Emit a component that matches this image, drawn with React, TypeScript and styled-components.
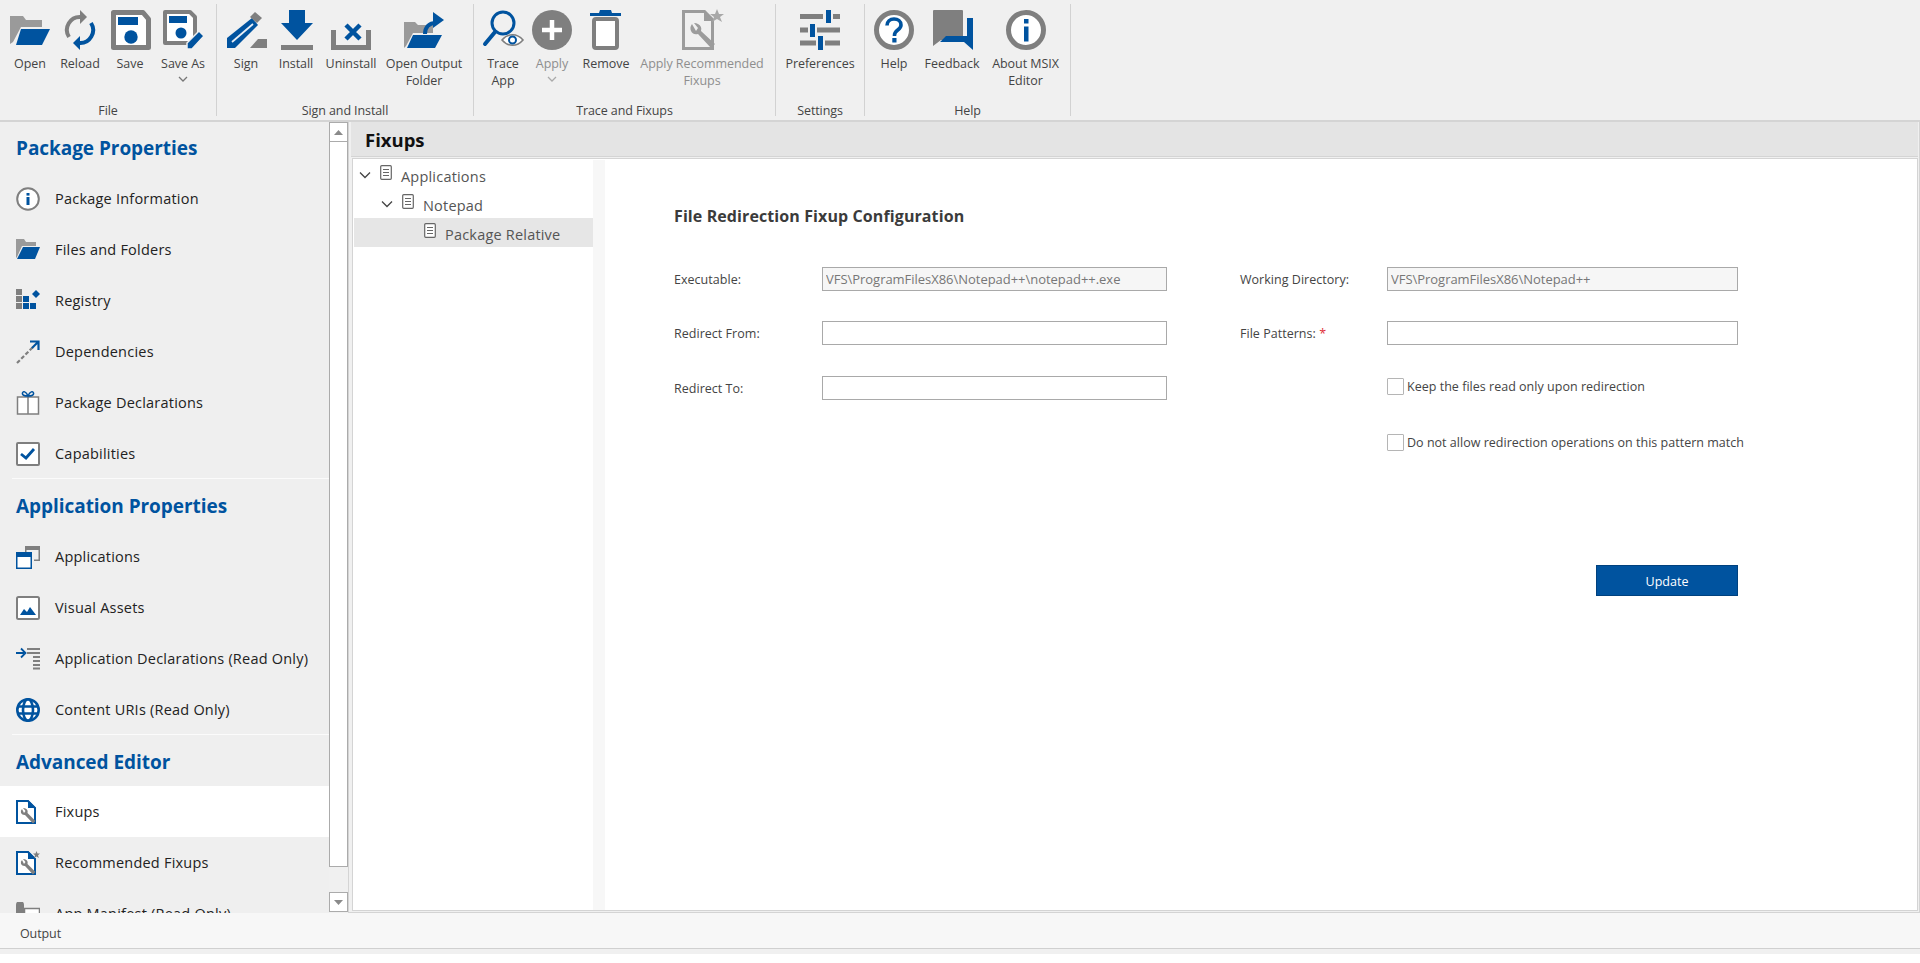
import React from "react";
import styled, { createGlobalStyle } from "styled-components";

const BLUE = "#00539f";
const GRAY = "#7f7f7f";
const FONT = `"Open Sans", "Noto Sans", "Liberation Sans", sans-serif`;

const Global = createGlobalStyle`
  html, body { margin: 0; padding: 0; height: 100%; background: #fff; }
  #root { height: 100%; }
  * { box-sizing: border-box; }
`;

const Page = styled.div`
  height: 963px;
  width: 1920px;
  display: flex;
  flex-direction: column;
  overflow: hidden;
  font-family: ${FONT};
  background: #fff;
`;

const Ribbon = styled.header`
  height: 122px;
  flex: none;
  display: flex;
  background: #f0f0f0;
  border-bottom: 2px solid #d4d4d4;
  padding-top: 4px;
`;

const Group = styled.section<{ $w: number; $pl?: number }>`
  width: ${(p) => p.$w}px;
  flex: none;
  height: 112px;
  border-right: 1px solid #d2d2d2;
  display: flex;
  flex-direction: column;
  padding-left: ${(p) => p.$pl ?? 0}px;
`;

const GroupButtons = styled.div`
  display: flex;
  flex: none;
  height: 100px;
`;

const GroupTitle = styled.div<{ $ml?: number }>`
  text-align: center;
  font-size: 12.5px;
  letter-spacing: -0.1px;
  line-height: 12px;
  padding-top: 1px;
  margin-left: ${(p) => p.$ml ?? 0}px;
  color: #444;
`;

const RibbonButton = styled.div<{ $w: number; $off?: boolean }>`
  width: ${(p) => p.$w}px;
  flex: none;
  display: flex;
  flex-direction: column;
  align-items: center;
  padding-top: 4px;
  color: ${(p) => (p.$off ? "#8e8e8e" : "#444")};
`;

const IconSlot = styled.svg`
  width: 44px;
  height: 44px;
  flex: none;
  display: block;
`;

const RibbonLabel = styled.div`
  margin-top: 3px;
  font-size: 12.5px;
  letter-spacing: -0.05px;
  line-height: 17px;
  text-align: center;
  white-space: pre-line;
`;

const Caret = styled.svg`
  width: 10px;
  height: 6px;
  margin-top: 4px;
  display: block;
`;

const Body = styled.div`
  height: 791px;
  flex: none;
  display: flex;
  background: #f0f0f0;
`;

const Nav = styled.nav`
  width: 329px;
  flex: none;
  overflow: hidden;
  background: #efefef;
`;

const NavHeading = styled.h2<{ $h?: number; $pt?: number }>`
  margin: 0;
  height: ${(p) => p.$h ?? 52}px;
  padding: ${(p) => p.$pt ?? 0}px 0 0 16px;
  display: flex;
  align-items: center;
  color: ${BLUE};
  font-size: 19px;
  font-weight: 700;
  letter-spacing: -0.05px;
`;

const NavRow = styled.div<{ $active?: boolean }>`
  height: 51px;
  flex: none;
  display: flex;
  align-items: center;
  gap: 15px;
  padding-left: 16px;
  background: ${(p) => (p.$active ? "#fff" : "transparent")};
  color: #222;
  font-size: 14.5px;
  letter-spacing: 0.22px;
  white-space: nowrap;
`;

const NavIcon = styled.svg`
  width: 24px;
  height: 24px;
  flex: none;
  display: block;
`;

const NavDivider = styled.div`
  height: 1px;
  margin: -1px 0 0 12px;
  background: #fbfbfb;
`;

const Scrollbar = styled.div`
  width: 19px;
  flex: none;
  display: flex;
  flex-direction: column;
  padding-bottom: 1px;
  background: #f0f0f0;
`;

const ScrollButton = styled.div`
  height: 20px;
  flex: none;
  background: #fff;
  border: 1px solid #ababab;
  display: flex;
  align-items: center;
  justify-content: center;
`;

const ScrollThumb = styled.div`
  height: 725px;
  flex: none;
  background: #fff;
  border: 1px solid #ababab;
  border-top: none;
`;

const ScrollTrack = styled.div`
  flex: 1;
`;

const Arrow = styled.svg`
  width: 9px;
  height: 5px;
  display: block;
`;

const Main = styled.main`
  flex: 1;
  min-width: 0;
  display: flex;
  flex-direction: column;
  padding: 0 1px 1px 3px;
  border-left: 1px solid #d4d4d4;
  border-right: 1px solid #d4d4d4;
  border-bottom: 1px solid #d4d4d4;
`;

const MainHeader = styled.div`
  height: 35px;
  flex: none;
  display: flex;
  align-items: center;
  padding-left: 14px;
  margin-left: -1px;
  background: #e4e4e4;
  border-bottom: 1px solid #d4d4d4;
  color: #111;
  font-size: 18.5px;
  font-weight: 700;
`;

const Panel = styled.div`
  flex: 1;
  min-height: 0;
  display: flex;
  margin-top: 1px;
  padding: 1px 0 0 1px;
  background: #fff;
  border: 1px solid #d4d4d4;
`;

const Tree = styled.div`
  width: 239px;
  flex: none;
  background: #fff;
`;

const TreeRow = styled.div<{ $depth: number; $selected?: boolean }>`
  height: 29px;
  display: flex;
  align-items: center;
  padding-left: ${(p) => 5 + p.$depth * 22}px;
  background: ${(p) => (p.$selected ? "#e6e6e6" : "transparent")};
`;

const TreeChevron = styled.svg`
  width: 12px;
  height: 8px;
  flex: none;
  display: block;
`;

const TreeGap = styled.span`
  width: 12px;
  flex: none;
`;

const TreeDoc = styled.svg`
  width: 12px;
  height: 15px;
  flex: none;
  margin: -5px 0 0 9px;
  display: block;
`;

const TreeText = styled.span`
  margin: 3px 0 0 9px;
  color: #555;
  font-size: 14.5px;
  letter-spacing: 0.2px;
  white-space: nowrap;
`;

const Gutter = styled.div`
  width: 12px;
  flex: none;
  background: #f7f7f7;
`;

const Form = styled.form`
  flex: 1;
  min-width: 0;
  padding: 47px 0 0 69px;
`;

const FormTitle = styled.h3`
  margin: 0 0 41px;
  height: 19px;
  line-height: 19px;
  font-size: 16px;
  font-weight: 700;
  color: #3b3b3b;
  letter-spacing: 0.1px;
`;

const FormColumns = styled.div`
  display: flex;
  gap: 73px;
`;

const FormColumn = styled.div<{ $w: number }>`
  width: ${(p) => p.$w}px;
  flex: none;
  display: flex;
  flex-direction: column;
`;

const Field = styled.div<{ $label: number; $gap?: number }>`
  height: 24px;
  margin-bottom: ${(p) => p.$gap ?? 30}px;
  display: grid;
  grid-template-columns: ${(p) => p.$label}px 1fr;
  align-items: center;
`;

const FieldLabel = styled.label`
  font-size: 12.5px;
  letter-spacing: 0.03px;
  color: #444;
  white-space: nowrap;
`;

const Required = styled.span`
  color: #e0303a;
`;

const TextInput = styled.input`
  width: 100%;
  height: 24px;
  padding: 0 3px;
  border: 1px solid #a9a9a9;
  border-radius: 0;
  outline: none;
  font-family: ${FONT};
  font-size: 13px;
  letter-spacing: -0.03px;
  color: #777;
  background: #fff;
  &:read-only {
    background: #f6f6f6;
  }
`;

const CheckRow = styled.div`
  height: 17px;
  margin: 3px 0 0 147px;
  display: flex;
  align-items: center;
  gap: 3px;
  color: #444;
  font-size: 12.5px;
  letter-spacing: 0.02px;
  white-space: nowrap;
`;

const CheckSpacer = styled.div`
  height: 36px;
  flex: none;
`;

const CheckBox = styled.span`
  width: 17px;
  height: 17px;
  flex: none;
  background: #fff;
  border: 1px solid #b5b5b5;
  border-radius: 1px;
`;

const UpdateButton = styled.button`
  width: 142px;
  height: 31px;
  margin: 114px 0 0 auto;
  padding: 1px 0 0;
  background: ${BLUE};
  border: 1px solid #00417e;
  color: #fff;
  font-family: ${FONT};
  font-size: 12.5px;
`;

const OutputBar = styled.footer`
  height: 36px;
  flex: none;
  display: flex;
  align-items: center;
  padding: 5px 0 0 20px;
  background: #f7f7f7;
  border-bottom: 1px solid #d0d0d0;
  color: #444;
  font-size: 12.5px;
  letter-spacing: -0.1px;
`;

const BottomStrip = styled.div`
  height: 5px;
  flex: none;
  background: #f0f0f0;
`;

/* ---------- ribbon icons (44x44) ---------- */

const OpenIcon = () => (
  <IconSlot viewBox="0 0 44 44">
    <path d="M2 36V8h13l3 4h16v7H13L5 34z" fill="#9a9a9a" />
    <path d="M8 37l5-16h29l-8 16z" fill={BLUE} />
  </IconSlot>
);

const ReloadIcon = () => (
  <IconSlot viewBox="0 0 44 44">
    <path d="M11 29A13 13 0 0 1 23 9" fill="none" stroke={GRAY} strokeWidth="4" />
    <path d="M22 2l7 7-7 7z" fill={GRAY} />
    <path d="M33 15A13 13 0 0 1 21 35" fill="none" stroke={BLUE} strokeWidth="4" />
    <path d="M22 28l-7 7 7 7z" fill={BLUE} />
  </IconSlot>
);

const SaveIcon = () => (
  <IconSlot viewBox="0 0 44 44">
    <path d="M5.5 4.500H35l5.500 6.500v28.500H5.500z" fill="#fff" stroke={GRAY} strokeWidth="5" strokeLinejoin="round" />
    <rect x="10" y="9" width="20" height="8" fill={BLUE} />
    <circle cx="23" cy="29" r="6.7" fill={BLUE} />
  </IconSlot>
);

const SaveAsIcon = () => (
  <IconSlot viewBox="0 0 44 44">
    <path d="M4 4h25l5 5v26H4z" fill="#fff" stroke={GRAY} strokeWidth="4" strokeLinejoin="round" />
    <rect x="8" y="8" width="18" height="7" fill={BLUE} />
    <circle cx="20" cy="25" r="5.500" fill={BLUE} />
    <path d="M26 41v-6l12-12 5 5-12 13z" fill={BLUE} stroke="#f0f0f0" strokeWidth="1.500" />
  </IconSlot>
);

const SignIcon = () => (
  <IconSlot viewBox="0 0 44 44">
    <path d="M3 30l25-20 6 7-23 23H3z" fill={BLUE} />
    <path d="M8 34l21-18" stroke="#e8eef5" strokeWidth="1.800" />
    <path d="M26 9l5-5 7 6-5 5z" fill={GRAY} />
    <path d="M26 40l8-9h9v9z" fill={GRAY} />
  </IconSlot>
);

const InstallIcon = () => (
  <IconSlot viewBox="0 0 44 44">
    <path d="M15 2h16v13h8L23 32 7 15h8z" fill={BLUE} />
    <rect x="7" y="37" width="32" height="5" fill={GRAY} />
  </IconSlot>
);

const UninstallIcon = () => (
  <IconSlot viewBox="0 0 44 44">
    <path d="M4.500 22v17.500h35V22" fill="none" stroke={GRAY} strokeWidth="5" />
    <path d="M17 17l14 14M31 17L17 31" stroke={BLUE} strokeWidth="4.500" />
  </IconSlot>
);

const OutputFolderIcon = () => (
  <IconSlot viewBox="0 0 44 44">
    <path d="M2 40V14h11l3 3h15v8H11L4 38z" fill="#9a9a9a" />
    <path d="M5 40l6-13h29l-7 13z" fill={BLUE} />
    <path d="M23 26c0-7 4-11 11-11" fill="none" stroke={BLUE} strokeWidth="4" />
    <path d="M31 4l11 8-11 8z" fill={BLUE} />
  </IconSlot>
);

const TraceIcon = () => (
  <IconSlot viewBox="0 0 44 44">
    <circle cx="22" cy="15" r="11" fill="none" stroke={BLUE} strokeWidth="3" />
    <path d="M14 24L4 36" stroke={BLUE} strokeWidth="4" strokeLinecap="round" />
    <path d="M21 32c6-7 15-7 21 0-6 7-15 7-21 0z" fill="#fff" stroke={GRAY} strokeWidth="1.6" />
    <circle cx="31.5" cy="32" r="3.5" fill="#fff" stroke={BLUE} strokeWidth="2" />
  </IconSlot>
);

const ApplyIcon = () => (
  <IconSlot viewBox="0 0 44 44">
    <circle cx="22" cy="22" r="20" fill={GRAY} />
    <path d="M22 12v20M12 22h20" stroke="#fff" strokeWidth="4.5" />
  </IconSlot>
);

const RemoveIcon = () => (
  <IconSlot viewBox="0 0 44 44">
    <path d="M6 5h9l1-3h11l1 3h9v3H6z" fill={BLUE} />
    <rect x="10" y="11" width="23" height="29" rx="2" fill="#fff" stroke={GRAY} strokeWidth="4" />
  </IconSlot>
);

const RecommendIcon = () => (
  <IconSlot viewBox="0 0 44 44">
    <path d="M3.500 3.500h21l8 8V40.500h-29z" fill="#f0f0f0" stroke="#9c9c9c" strokeWidth="3" />
    <path d="M24 3v10h9z" fill="#9c9c9c" />
    <path d="M12 16a7 7 0 0 0-1 7 6 6 0 0 0 7 3l13 14 4-4-14-13a6 6 0 0 0-3-7 7 7 0 0 0-4-1l4 5-2 3z" fill="#9c9c9c" />
    <path d="M37 1l2 5h5l-4 3 2 5-5-3-5 3 2-5-4-3h5z" fill="#a8a8a8" />
  </IconSlot>
);

const PrefsIcon = () => (
  <IconSlot viewBox="0 0 44 44">
    <path d="M2 8.500h23M35 8.500h7M2 22h8M19 22h23M2 35h16M27 35h15" stroke={GRAY} strokeWidth="5" />
    <rect x="28" y="2" width="5" height="13" fill={BLUE} />
    <rect x="12" y="16" width="5" height="13" fill={BLUE} />
    <rect x="20" y="28" width="5" height="14" fill={BLUE} />
  </IconSlot>
);

const HelpIcon = () => (
  <IconSlot viewBox="0 0 44 44">
    <circle cx="22" cy="22" r="17.5" fill="#fff" stroke={GRAY} strokeWidth="5" />
    <path d="M15 17.500c0-4 3-6.500 7-6.500s7 2.500 7 6c0 5-6.500 5-6.500 10v1" fill="none" stroke={BLUE} strokeWidth="3.6" />
    <rect x="20.3" y="30" width="4.2" height="4.5" fill={BLUE} />
  </IconSlot>
);

const FeedbackIcon = () => (
  <IconSlot viewBox="0 0 44 44">
    <path d="M4 2h28a1 1 0 0 1 1 1v28a1 1 0 0 1-1 1H11l-8 6V3a1 1 0 0 1 1-1z" fill={GRAY} />
    <path d="M37 10h6v32l-9-8H10l6-6h21z" fill={BLUE} />
  </IconSlot>
);

const AboutIcon = () => (
  <IconSlot viewBox="0 0 44 44">
    <circle cx="22" cy="22" r="17.5" fill="#fff" stroke={GRAY} strokeWidth="5" />
    <rect x="20" y="11" width="4.5" height="4.5" fill={BLUE} />
    <rect x="20" y="18.5" width="4.5" height="15" fill={BLUE} />
  </IconSlot>
);

const CaretDown = ({ color }: { color: string }) => (
  <Caret viewBox="0 0 10 6">
    <path d="M1 1l4 4 4-4" fill="none" stroke={color} strokeWidth="1.3" />
  </Caret>
);

/* ---------- nav icons (24x24) ---------- */

const InfoNav = () => (
  <NavIcon viewBox="0 0 24 24">
    <circle cx="12" cy="12" r="10.8" fill="#fff" stroke={GRAY} strokeWidth="2" />
    <rect x="10.5" y="6" width="3" height="2.6" fill={BLUE} />
    <rect x="10.5" y="10" width="3" height="8" fill={BLUE} />
  </NavIcon>
);
const FolderNav = () => (
  <NavIcon viewBox="0 0 24 24">
    <path d="M0 20V1h8l2 3h10v4H6L1 19z" fill="#9a9a9a" />
    <path d="M1 21L7 9h17l-5 12z" fill={BLUE} />
  </NavIcon>
);
const RegistryNav = () => (
  <NavIcon viewBox="0 0 24 24">
    <path d="M0 0h6v6H0zM0 7h6v6H0zM0 14h6v6H0z" fill={GRAY} />
    <path d="M7 7h6v6H7zM7 14h6v6H7zM14 14h6v6h-6zM20 1l4 4-4 4-4-4z" fill={BLUE} />
  </NavIcon>
);
const DependNav = () => (
  <NavIcon viewBox="0 0 24 24">
    <path d="M1 23L17 7" stroke={GRAY} strokeWidth="2.2" strokeDasharray="4 2" />
    <path d="M14 1.5h8.500V10M21.500 2.500L16 8" fill="none" stroke={BLUE} strokeWidth="2.2" />
  </NavIcon>
);
const GiftNav = () => (
  <NavIcon viewBox="0 0 24 24">
    <rect x="1.5" y="6" width="21" height="17" fill="#fff" stroke={GRAY} strokeWidth="1.5" />
    <path d="M12 6v17" stroke={GRAY} strokeWidth="1.5" />
    <path d="M12 5C8 5 6 4 6.500 2S10 0 12 5c2-5 5-5 5.500-3S16 5 12 5z" fill="none" stroke={BLUE} strokeWidth="1.5" />
  </NavIcon>
);
const CapNav = () => (
  <NavIcon viewBox="0 0 24 24">
    <rect x="1" y="1" width="22" height="22" rx="1" fill="#fff" stroke={GRAY} strokeWidth="2" />
    <path d="M5 12l5 4 8-9" fill="none" stroke={BLUE} strokeWidth="2.8" />
  </NavIcon>
);
const AppsNav = () => (
  <NavIcon viewBox="0 0 24 24">
    <path d="M9 1h15v15h-6v-1.500h4.500V5H10.500v2H9z" fill={GRAY} />
    <path d="M0 7h16v17H0z" fill={BLUE} />
    <rect x="1.5" y="12" width="13" height="10.5" fill="#fff" />
  </NavIcon>
);
const VisualNav = () => (
  <NavIcon viewBox="0 0 24 24">
    <rect x="1" y="1" width="22" height="22" rx="1.5" fill="#fff" stroke={GRAY} strokeWidth="2" />
    <path d="M4 19l4-6 3 3 3-5 6 8z" fill={BLUE} />
  </NavIcon>
);
const DeclNav = () => (
  <NavIcon viewBox="0 0 24 24">
    <path d="M0 6h8M5 1.500L9.500 6 5 10.500" fill="none" stroke={BLUE} strokeWidth="1.8" />
    <path d="M11 1h13v2H11zM11 5h13v2H11zM17 9h7v2h-7zM17 13h7v2h-7zM17 17h7v2h-7zM17 20.500h7v2h-7z" fill={GRAY} />
  </NavIcon>
);
const GlobeNav = () => (
  <NavIcon viewBox="0 0 24 24">
    <circle cx="12" cy="12" r="10.7" fill="#fff" stroke={BLUE} strokeWidth="2.6" />
    <ellipse cx="12" cy="12" rx="5" ry="10.7" fill="none" stroke={BLUE} strokeWidth="2.6" />
    <path d="M2 8.500h20M2 15.500h20" stroke={BLUE} strokeWidth="2.6" />
  </NavIcon>
);
const FixNav = () => (
  <NavIcon viewBox="0 0 24 24">
    <path d="M1 1h11l7 7v15H1z" fill="#fff" stroke={BLUE} strokeWidth="2" />
    <path d="M12 0v8h8z" fill={BLUE} />
    <path d="M6 9a4 4 0 0 0-1 4 4 4 0 0 0 4 2l8 8.500 2.500-2.500-8-8a4 4 0 0 0-2-4.500 4 4 0 0 0-2.500-.500l2.500 3-1.500 2z" fill={GRAY} />
  </NavIcon>
);
const RecNav = () => (
  <NavIcon viewBox="0 0 24 24">
    <path d="M1 1h11l7 7v15H1z" fill="#fff" stroke={BLUE} strokeWidth="2" />
    <path d="M12 0v8h8z" fill={BLUE} />
    <path d="M6 9a4 4 0 0 0-1 4 4 4 0 0 0 4 2l8 8.500 2.500-2.500-8-8a4 4 0 0 0-2-4.500 4 4 0 0 0-2.500-.500l2.500 3-1.500 2z" fill={GRAY} />
    <path d="M20.500 0l1 2.500H24l-2 1.700.8 2.800-2.300-1.600-2.300 1.600.8-2.800-2-1.700h2.500z" fill={GRAY} />
  </NavIcon>
);
const ManifestNav = () => (
  <NavIcon viewBox="0 0 24 24">
    <path d="M0 3a4 4 0 0 1 8 0v21H0z" fill={GRAY} />
    <rect x="8.5" y="6.5" width="15" height="17" fill="#fff" stroke={GRAY} strokeWidth="1.5" />
    <path d="M11 11h3v2h-3zM16 11h5v2h-5zM11 16h3v2h-3zM16 16h5v2h-5z" fill={BLUE} />
  </NavIcon>
);

const DocIcon = () => (
  <TreeDoc viewBox="0 0 12 15">
    <rect x="0.7" y="0.7" width="10.6" height="13.6" rx="1" fill="#fff" stroke="#666" strokeWidth="1.2" />
    <path d="M3 4.500h6M3 7.500h6M3 10.500h6" stroke="#666" strokeWidth="1.2" />
  </TreeDoc>
);

const Chevron = () => (
  <TreeChevron viewBox="0 0 12 8">
    <path d="M1 1.500l5 5 5-5" fill="none" stroke="#444" strokeWidth="1.3" />
  </TreeChevron>
);

type NavItem = { icon: React.ReactNode; label: string; active?: boolean };

const pkgItems: NavItem[] = [
  { icon: <InfoNav />, label: "Package Information" },
  { icon: <FolderNav />, label: "Files and Folders" },
  { icon: <RegistryNav />, label: "Registry" },
  { icon: <DependNav />, label: "Dependencies" },
  { icon: <GiftNav />, label: "Package Declarations" },
  { icon: <CapNav />, label: "Capabilities" },
];
const appItems: NavItem[] = [
  { icon: <AppsNav />, label: "Applications" },
  { icon: <VisualNav />, label: "Visual Assets" },
  { icon: <DeclNav />, label: "Application Declarations (Read Only)" },
  { icon: <GlobeNav />, label: "Content URIs (Read Only)" },
];
const advItems: NavItem[] = [
  { icon: <FixNav />, label: "Fixups", active: true },
  { icon: <RecNav />, label: "Recommended Fixups" },
  { icon: <ManifestNav />, label: "App Manifest (Read Only)" },
];

const renderRows = (items: NavItem[]) =>
  items.map((it) => (
    <NavRow key={it.label} $active={it.active}>
      {it.icon}
      <span>{it.label}</span>
    </NavRow>
  ));

export default function App() {
  return (
    <Page>
      <Global />
      <Ribbon>
        <Group $w={217} $pl={8}>
          <GroupButtons>
            <RibbonButton $w={44}><OpenIcon /><RibbonLabel>Open</RibbonLabel></RibbonButton>
            <RibbonButton $w={56}><ReloadIcon /><RibbonLabel>Reload</RibbonLabel></RibbonButton>
            <RibbonButton $w={44}><SaveIcon /><RibbonLabel>Save</RibbonLabel></RibbonButton>
            <RibbonButton $w={62}><SaveAsIcon /><RibbonLabel>Save As</RibbonLabel><CaretDown color="#777" /></RibbonButton>
          </GroupButtons>
          <GroupTitle $ml={-8}>File</GroupTitle>
        </Group>
        <Group $w={257}>
          <GroupButtons>
            <RibbonButton $w={58}><SignIcon /><RibbonLabel>Sign</RibbonLabel></RibbonButton>
            <RibbonButton $w={42}><InstallIcon /><RibbonLabel>Install</RibbonLabel></RibbonButton>
            <RibbonButton $w={68}><UninstallIcon /><RibbonLabel>Uninstall</RibbonLabel></RibbonButton>
            <RibbonButton $w={78}><OutputFolderIcon /><RibbonLabel>{"Open Output\nFolder"}</RibbonLabel></RibbonButton>
          </GroupButtons>
          <GroupTitle>Sign and Install</GroupTitle>
        </Group>
        <Group $w={302}>
          <GroupButtons>
            <RibbonButton $w={58}><TraceIcon /><RibbonLabel>{"Trace\nApp"}</RibbonLabel></RibbonButton>
            <RibbonButton $w={40} $off><ApplyIcon /><RibbonLabel>Apply</RibbonLabel><CaretDown color="#aaa" /></RibbonButton>
            <RibbonButton $w={68}><RemoveIcon /><RibbonLabel>Remove</RibbonLabel></RibbonButton>
            <RibbonButton $w={124} $off><RecommendIcon /><RibbonLabel>{"Apply Recommended\nFixups"}</RibbonLabel></RibbonButton>
          </GroupButtons>
          <GroupTitle>Trace and Fixups</GroupTitle>
        </Group>
        <Group $w={89}>
          <GroupButtons>
            <RibbonButton $w={88}><PrefsIcon /><RibbonLabel>Preferences</RibbonLabel></RibbonButton>
          </GroupButtons>
          <GroupTitle>Settings</GroupTitle>
        </Group>
        <Group $w={206}>
          <GroupButtons>
            <RibbonButton $w={58}><HelpIcon /><RibbonLabel>Help</RibbonLabel></RibbonButton>
            <RibbonButton $w={58}><FeedbackIcon /><RibbonLabel>Feedback</RibbonLabel></RibbonButton>
            <RibbonButton $w={89}><AboutIcon /><RibbonLabel>{"About MSIX\nEditor"}</RibbonLabel></RibbonButton>
          </GroupButtons>
          <GroupTitle>Help</GroupTitle>
        </Group>
      </Ribbon>

      <Body>
        <Nav>
          <NavHeading $h={51}>Package Properties</NavHeading>
          {renderRows(pkgItems)}
          <NavDivider />
          <NavHeading $pt={2}>Application Properties</NavHeading>
          {renderRows(appItems)}
          <NavDivider />
          <NavHeading $h={51} $pt={2}>Advanced Editor</NavHeading>
          {renderRows(advItems)}
        </Nav>
        <Scrollbar>
          <ScrollButton>
            <Arrow viewBox="0 0 9 5"><path d="M0 5l4.500-5L9 5z" fill="#8a8a8a" /></Arrow>
          </ScrollButton>
          <ScrollThumb />
          <ScrollTrack />
          <ScrollButton>
            <Arrow viewBox="0 0 9 5"><path d="M0 0l4.500 5L9 0z" fill="#8a8a8a" /></Arrow>
          </ScrollButton>
        </Scrollbar>
        <Main>
          <MainHeader>Fixups</MainHeader>
          <Panel>
            <Tree>
              <TreeRow $depth={0}><Chevron /><DocIcon /><TreeText>Applications</TreeText></TreeRow>
              <TreeRow $depth={1}><Chevron /><DocIcon /><TreeText>Notepad</TreeText></TreeRow>
              <TreeRow $depth={2} $selected><TreeGap /><DocIcon /><TreeText>Package Relative</TreeText></TreeRow>
            </Tree>
            <Gutter />
            <Form>
              <FormTitle>File Redirection Fixup Configuration</FormTitle>
              <FormColumns>
                <FormColumn $w={493}>
                  <Field $label={148}>
                    <FieldLabel>Executable:</FieldLabel>
                    <TextInput readOnly defaultValue="VFS\ProgramFilesX86\Notepad++\notepad++.exe" />
                  </Field>
                  <Field $label={148} $gap={31}>
                    <FieldLabel>Redirect From:</FieldLabel>
                    <TextInput />
                  </Field>
                  <Field $label={148}>
                    <FieldLabel>Redirect To:</FieldLabel>
                    <TextInput />
                  </Field>
                </FormColumn>
                <FormColumn $w={498}>
                  <Field $label={147}>
                    <FieldLabel>Working Directory:</FieldLabel>
                    <TextInput readOnly defaultValue="VFS\ProgramFilesX86\Notepad++" />
                  </Field>
                  <Field $label={147}>
                    <FieldLabel>File Patterns: <Required>*</Required></FieldLabel>
                    <TextInput />
                  </Field>
                  <CheckRow><CheckBox /><span>Keep the files read only upon redirection</span></CheckRow>
                  <CheckSpacer />
                  <CheckRow><CheckBox /><span>Do not allow redirection operations on this pattern match</span></CheckRow>
                  <UpdateButton type="button">Update</UpdateButton>
                </FormColumn>
              </FormColumns>
            </Form>
          </Panel>
        </Main>
      </Body>

      <OutputBar>Output</OutputBar>
      <BottomStrip />
    </Page>
  );
}
